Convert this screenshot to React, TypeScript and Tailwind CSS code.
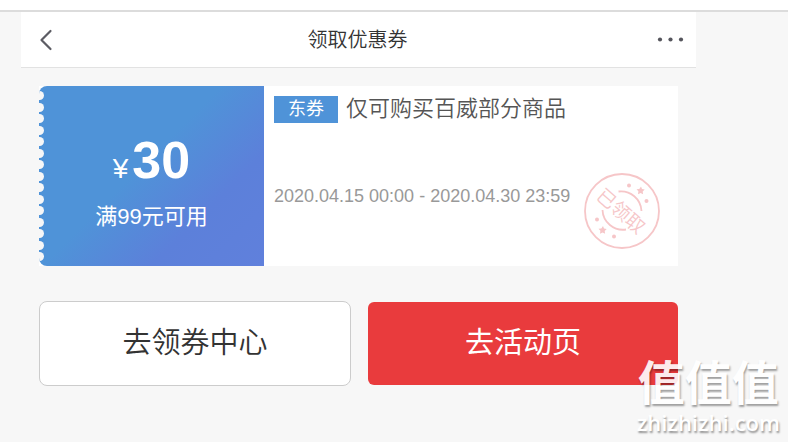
import React from "react";

interface Coupon {
  amount: number;
  condition: string;
  tag: string;
  title: string;
  period: string;
}

const coupon: Coupon = {
  amount: 30,
  condition: "满99元可用",
  tag: "东券",
  title: "仅可购买百威部分商品",
  period: "2020.04.15 00:00 - 2020.04.30 23:59",
};

// number of round bites along the ticket's left edge
const NOTCHES = 15;

function Header() {
  return (
    <header className="flex h-14 items-center justify-between border-b border-[#e2e2e2] bg-white pl-[18px] pr-3">
      <button type="button" aria-label="返回" className="w-5">
        <svg viewBox="0 0 14 22" className="h-[22px] w-[14px]" fill="none">
          <path
            d="M11.5 2 L2.5 11 L11.5 20"
            stroke="#5c5c64"
            strokeWidth="2.2"
            strokeLinecap="round"
            strokeLinejoin="round"
          />
        </svg>
      </button>
      <h1 className="text-xl leading-7 font-[350] text-[#333333]">领取优惠券</h1>
      <button type="button" aria-label="更多" className="w-7">
        <svg viewBox="0 0 28 6" className="h-[6px] w-7" fill="#55555c">
          <circle cx="4" cy="2.5" r="2.1" />
          <circle cx="14.5" cy="2.5" r="2.1" />
          <circle cx="25" cy="2.5" r="2.1" />
        </svg>
      </button>
    </header>
  );
}

function Stamp() {
  return (
    <svg
      viewBox="0 0 76 76"
      className="absolute bottom-[17px] right-[18px] h-[76px] w-[76px]"
      fill="none"
      stroke="#f6c6c8"
      role="img"
      aria-label="已领取"
    >
      <circle cx="38" cy="38" r="37" strokeWidth="1.8" />
      <path d="M34.500 18.500 A20.500 20.500 0 0 1 57.500 38" strokeWidth="1.8" />
      <path d="M18.500 37 A20.500 20.500 0 0 0 42 56.500" strokeWidth="1.8" />
      <g fill="#f6c6c8" stroke="none">
        <circle cx="45" cy="12.500" r="2" />
        <path d="M57 13.500 l1 2.600 2.700 .4 -2 1.900 .4 2.800 -2.500 -1.200 -2.600 1.200 .4 -2.900 -1.900 -2 2.800 -.3z" />
        <circle cx="62.500" cy="28" r="2" />
        <circle cx="13" cy="46.500" r="2" />
        <path d="M19 53 l1 2.600 2.700 .4 -2 1.900 .4 2.800 -2.500 -1.200 -2.600 1.200 .4 -2.900 -1.900 -2 2.800 -.3z" />
        <circle cx="30" cy="63.500" r="2" />
        <text
          x="37"
          y="45"
          textAnchor="middle"
          fontSize="19"
          fontWeight="350"
          transform="rotate(41 37 38)"
        >
          已领取
        </text>
      </g>
    </svg>
  );
}

function CouponCard({ c }: { c: Coupon }) {
  return (
    <article className="flex h-[180px] bg-white">
      <div className="relative flex w-[225px] shrink-0 flex-col items-center overflow-hidden rounded-l-lg bg-[linear-gradient(135deg,#4f93d8_0%,#4f93d8_45%,#5c80da_72%,#6080dc_100%)] pt-[42px] text-white">
        <div className="absolute inset-y-0 -left-1 flex flex-col justify-between py-[5px]">
          {Array.from({ length: NOTCHES }, (_, i) => (
            <span key={i} className="h-[9px] w-[9px] rounded-full bg-[#f7f7f7]" />
          ))}
        </div>
        <p className="flex items-baseline gap-1 leading-[64px]">
          <span className="text-[28px]">¥</span>
          <strong className="text-[52px] font-bold">{c.amount}</strong>
        </p>
        <p className="text-[22px] leading-8">{c.condition}</p>
      </div>
      <div className="relative min-w-0 flex-1 pl-[10px] pt-[7px]">
        <div className="flex items-center gap-2">
          <span className="bg-[#4f93d8] px-[14px] text-lg leading-[27px] text-white">{c.tag}</span>
          <h2 className="text-[22px] leading-8 font-[350] text-[#555555]">{c.title}</h2>
        </div>
        <p className="mt-[57px] text-lg leading-7 text-[#999999]">{c.period}</p>
        <Stamp />
      </div>
    </article>
  );
}

function Watermark() {
  return (
    <div className="absolute bottom-[6px] right-2 text-center text-white [text-shadow:1px_2px_2px_rgba(0,0,0,0.4)]">
      <p className="text-[47px] font-bold leading-[48px] opacity-90">值值值</p>
      <p className="font-['Open_Sans','Noto_Sans',sans-serif] text-[22px] font-semibold leading-7">
        zhizhizhi.com
      </p>
    </div>
  );
}

export default function App() {
  return (
    <div className="relative min-h-screen border-t-[10px] border-white bg-[#f7f7f7] font-['Liberation_Sans','Noto_Sans_CJK_SC',sans-serif]">
      <div className="h-[2px] bg-[#dcdcdc]" />
      <main className="ml-[21px] mr-[92px]">
        <Header />
        <div className="px-[18px] pt-[18px]">
          <CouponCard c={coupon} />
          <div className="mt-[35px] flex items-center gap-[17px]">
            <button
              type="button"
              className="h-[85px] flex-1 rounded-lg border border-[#cccccc] bg-white text-[29px] font-[350] text-[#333333]"
            >
              去领券中心
            </button>
            <button
              type="button"
              className="h-[83px] flex-1 rounded-md bg-[#e93b3d] text-[29px] text-white"
            >
              去活动页
            </button>
          </div>
        </div>
      </main>
      <Watermark />
    </div>
  );
}
